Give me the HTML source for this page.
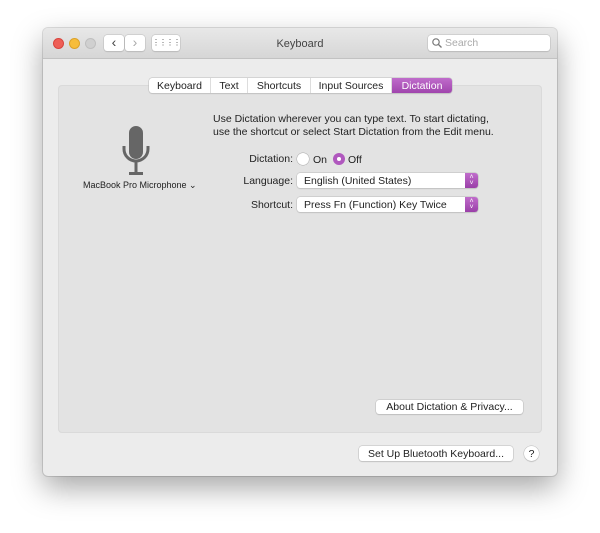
<!DOCTYPE html>
<html><head><style>
body{margin:0;width:600px;height:533px;background:#fff;font-family:"Liberation Sans",sans-serif;font-size:10.5px;color:#222;position:relative;overflow:hidden}
.win{position:absolute;left:43px;top:28px;width:514px;height:448px;border-radius:5px;background:#ececec;box-shadow:0 12px 30px rgba(0,0,0,.35),0 0 0 1px rgba(0,0,0,.12);overflow:hidden}
.tb{position:absolute;left:0;top:0;width:514px;height:30px;background:linear-gradient(#e8e8e8,#d6d6d6);border-bottom:1px solid #c2c2c2}
.dot{position:absolute;top:10px;width:11px;height:11px;border-radius:50%;box-sizing:border-box}
.btn{position:absolute;background:#fff;border-radius:3px;box-shadow:0 0 0 .5px #bbb,0 1px 1px rgba(0,0,0,.15);text-align:center;color:#222}
.abs{position:absolute}
.inner{position:absolute;left:15px;top:57px;width:484px;height:348px;background:#e3e3e3;border-radius:4px;box-shadow:inset 0 0 0 1px #dadada}
.tabs{position:absolute;left:106px;top:50px;height:15px;display:flex;background:#fff;border-radius:3px;box-shadow:0 0 0 .5px #bbb,0 1px 1px rgba(0,0,0,.12)}
.tabs div{height:15px;line-height:16px;text-align:center;border-right:1px solid #ddd;box-sizing:border-box}
.pop{position:absolute;left:254px;width:181px;height:15px;line-height:16px;background:#fff;border-radius:3px;box-shadow:0 0 0 .5px #bbb,0 1px 1px rgba(0,0,0,.12);padding-left:7px;box-sizing:border-box}
.pop i{position:absolute;right:0;top:0;width:13px;height:15px;background:linear-gradient(#c06ccb,#9a3fa8);border-radius:0 3px 3px 0;color:#fff;font-style:normal;font-size:7px;line-height:6px;text-align:center;padding-top:2px;box-sizing:border-box}
.lbl{position:absolute;text-align:right;width:100px}
</style></head><body>
<div class="win">
 <div class="tb">
  <div class="dot" style="left:10px;background:#ee5f57;border:.5px solid #d9443d"></div>
  <div class="dot" style="left:26px;background:#f7bd3b;border:.5px solid #dca22a"></div>
  <div class="dot" style="left:42px;background:#d0d0d0;border:.5px solid #bfbfbf"></div>
  <div class="btn" style="left:61px;top:7px;width:20px;height:16px;line-height:15px;font-size:14px;color:#444">&#8249;</div>
  <div class="btn" style="left:82px;top:7px;width:20px;height:16px;line-height:15px;font-size:14px;color:#aaa">&#8250;</div>
  <div class="btn" style="left:109px;top:7px;width:28px;height:16px;line-height:16px;font-size:8px;color:#555;letter-spacing:-1px">&#8942;&#8942;&#8942;&#8942;</div>
  <div class="abs" style="left:0;width:514px;top:10px;text-align:center;font-size:11px;color:#444">Keyboard</div>
  <div class="btn" style="left:385px;top:7px;width:122px;height:16px;text-align:left;line-height:17px;color:#aaa;padding-left:17px;box-sizing:border-box">Search
   <svg class="abs" style="left:4px;top:3px" width="10" height="10"><circle cx="4" cy="4" r="3.2" fill="none" stroke="#777" stroke-width="1.2"/><path d="M6.5 6.5L9.5 9.5" stroke="#777" stroke-width="1.3"/></svg></div>
 </div>
 <div class="inner"></div>
 <div class="tabs">
  <div style="width:62px">Keyboard</div><div style="width:37px">Text</div><div style="width:63px">Shortcuts</div><div style="width:81px">Input Sources</div>
  <div style="width:60px;background:linear-gradient(#bf6ccb,#a045ad);color:#fff;border-radius:0 3px 3px 0;border:0">Dictation</div>
 </div>
 <svg class="abs" style="left:78px;top:98px" width="32" height="50">
  <rect x="8" y="0" width="14" height="33" rx="7" fill="#666"/>
  <path d="M3 20v3a12 12 0 0 0 24 0v-3" fill="none" stroke="#666" stroke-width="3"/>
  <path d="M15 35v11M8 47.5h14" stroke="#666" stroke-width="3"/>
 </svg>
 <div class="abs" style="left:40px;top:152px;font-size:9px">MacBook Pro Microphone &#8964;</div>
 <div class="abs" style="left:170px;top:85px;line-height:13px">Use Dictation wherever you can type text. To start dictating,<br>use the shortcut or select Start Dictation from the Edit menu.</div>
 <div class="lbl" style="left:150px;top:125px">Dictation:</div>
 <div class="abs" style="left:254px;top:125px;width:12px;height:12px;border-radius:50%;background:#fff;box-shadow:0 0 0 .5px #aaa"></div>
 <div class="abs" style="left:270px;top:126px">On</div>
 <div class="abs" style="left:290px;top:125px;width:12px;height:12px;border-radius:50%;background:#b058be"><div class="abs" style="left:4px;top:4px;width:4px;height:4px;border-radius:50%;background:#fff"></div></div>
 <div class="abs" style="left:305px;top:126px">Off</div>
 <div class="lbl" style="left:150px;top:147px">Language:</div>
 <div class="pop" style="top:145px">English (United States)<i>&#708;<br>&#709;</i></div>
 <div class="lbl" style="left:150px;top:171px">Shortcut:</div>
 <div class="pop" style="top:169px">Press Fn (Function) Key Twice<i>&#708;<br>&#709;</i></div>
 <div class="btn" style="left:333px;top:372px;width:147px;height:14px;line-height:15px">About Dictation &amp; Privacy...</div>
 <div class="btn" style="left:316px;top:418px;width:154px;height:15px;line-height:16px">Set Up Bluetooth Keyboard...</div>
 <div class="btn" style="left:481px;top:418px;width:15px;height:15px;line-height:16px;border-radius:50%">?</div>
</div>
</body></html>
